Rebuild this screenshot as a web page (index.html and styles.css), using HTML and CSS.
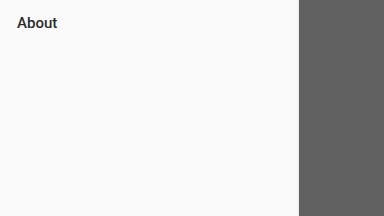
FILE: index.html
```html
<!DOCTYPE html>
<html lang="en">
<head>
    <meta charset="UTF-8">
    <meta name="viewport" content="width=device-width, initial-scale=1.0">
    <title>About</title>
    <link rel="stylesheet" href="styles.css">
</head>
<body>

    <div class="layout">
        <div class="drawer">
            <h1 class="drawer-title">About</h1>
        </div>
        <div class="scrim"></div>
    </div>

</body>
</html>
```

FILE: styles.css
```css
html, body {
    height: 100%;
}

body {
    font-family: Roboto, "Noto Sans", Arial, sans-serif;
    background-color: #606060;
    margin: 0;
}

.layout {
    display: flex;
    height: 100%;
}

.drawer {
    width: 299px;
    background-color: #fafafa;
    box-shadow: inset -2px 0 2px -1px rgba(0, 0, 0, 0.08);
    padding: 13px 17px;
    box-sizing: border-box;
}

.drawer-title {
    margin: 0;
    font-size: 15px;
    font-weight: 500;
    color: #2b2b2b;
    line-height: 20px;
}

.scrim {
    flex: 1;
    background-color: #606060;
}
```
